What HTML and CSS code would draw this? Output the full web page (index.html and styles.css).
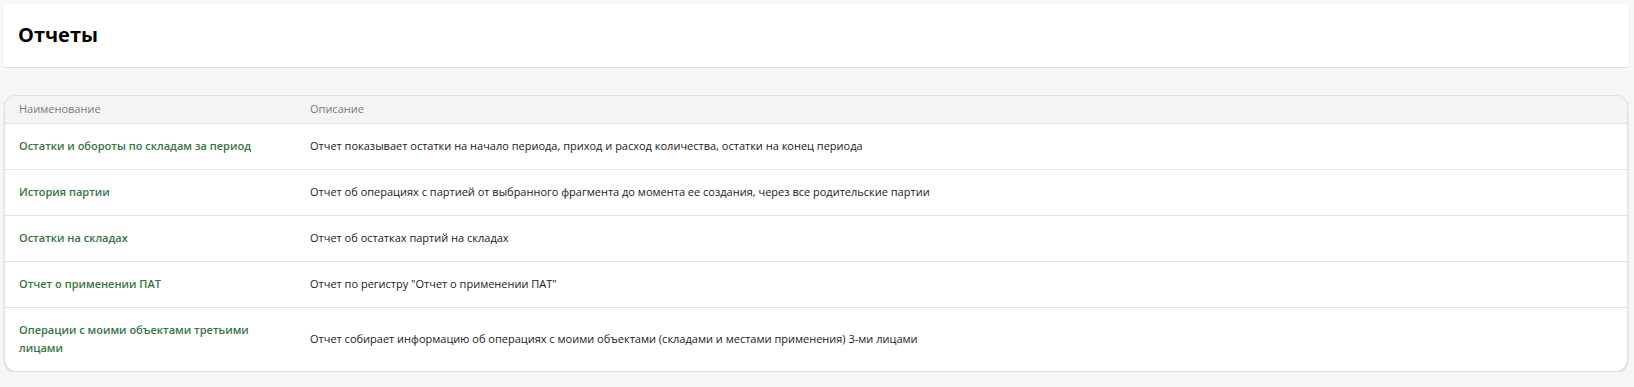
FILE: index.html
```html
<!DOCTYPE html>
<html lang="ru">
<head>
<meta charset="utf-8">
<title>Отчеты</title>
<link rel="stylesheet" href="styles.css">
</head>
<body>
<div class="page">
  <header class="page-header">
    <h1 class="page-title">Отчеты</h1>
  </header>
  <section class="card">
    <div class="row head">
      <div class="cell name">Наименование</div>
      <div class="cell desc">Описание</div>
    </div>
    <div class="row">
      <div class="cell name"><a class="link">Остатки и обороты по складам за период</a></div>
      <div class="cell desc">Отчет показывает остатки на начало периода, приход и расход количества, остатки на конец периода</div>
    </div>
    <div class="row">
      <div class="cell name"><a class="link">История партии</a></div>
      <div class="cell desc">Отчет об операциях с партией от выбранного фрагмента до момента ее создания, через все родительские партии</div>
    </div>
    <div class="row">
      <div class="cell name"><a class="link">Остатки на складах</a></div>
      <div class="cell desc">Отчет об остатках партий на складах</div>
    </div>
    <div class="row">
      <div class="cell name"><a class="link">Отчет о применении ПАТ</a></div>
      <div class="cell desc">Отчет по регистру "Отчет о применении ПАТ"</div>
    </div>
    <div class="row last">
      <div class="cell name"><a class="link">Операции с моими объектами третьими лицами</a></div>
      <div class="cell desc">Отчет собирает информацию об операциях с моими объектами (складами и местами применения) 3-ми лицами</div>
    </div>
  </section>
</div>
</body>
</html>
```

FILE: styles.css
```css
* { box-sizing: border-box; }
html, body {
  margin: 0;
  padding: 0;
  background: #f6f6f6;
  font-family: "Segoe UI", "Open Sans", "Noto Sans", sans-serif;
  color: #1f1f1f;
}
.page {
  padding: 4px 6px 0 4px;
}
.page-header {
  background: #fff;
  height: 64px;
  border-bottom: 1px solid #dcdcdc;
  display: flex;
  align-items: center;
  padding: 0 14px 2px;
}
.page-title {
  margin: 0;
  font-size: 20px;
  font-weight: 700;
  color: #000;
}
.card {
  margin-top: 27px;
  background: #fff;
  border: 1px solid #dedede;
  border-radius: 12px;
  overflow: hidden;
  box-shadow: 0 1px 2px rgba(0,0,0,0.12);
}
.row {
  display: grid;
  grid-template-columns: 291px 1fr;
  border-bottom: 1px solid #e2e2e2;
  font-size: 11px;
  line-height: 18px;
}
.row.last { border-bottom: none; }
.cell {
  padding: 13px 14px 14px;
  display: flex;
  align-items: center;
  color: #1a1a1a;
}
.row.head {
  background: #f4f4f4;
}
.row.head .cell {
  padding: 4px 14px 5px;
  color: #7a7a7a;
}
.row:not(.head) .cell.name { padding-right: 30px; }
.link {
  color: #35743f;
  font-weight: 600;
  text-decoration: none;
  cursor: pointer;
}
```
